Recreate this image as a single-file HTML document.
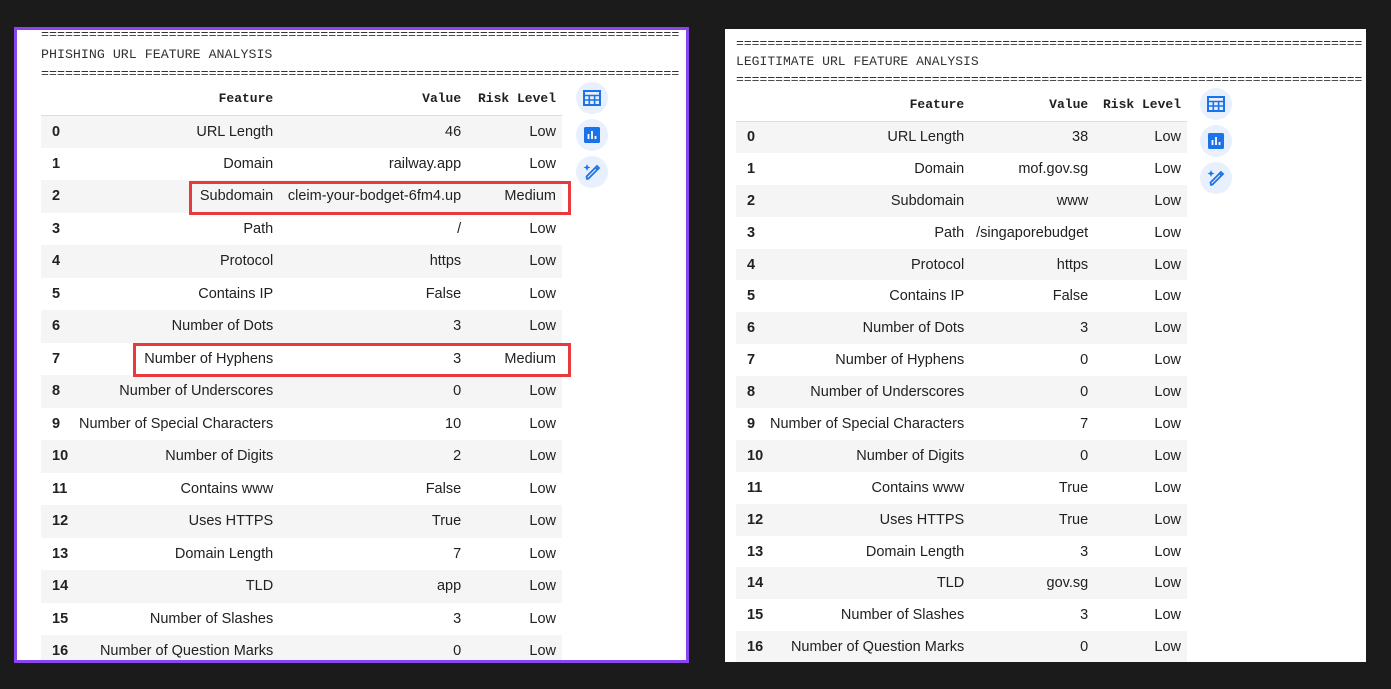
<!DOCTYPE html>
<html><head><meta charset="utf-8"><style>
*{margin:0;padding:0;box-sizing:border-box}
body{width:1391px;height:689px;background:#1c1b1c;position:relative;overflow:hidden;font-family:"Liberation Sans",sans-serif}
.panel{position:absolute;background:#fff;overflow:hidden}
#p1{left:14px;top:27px;width:675px;height:636px;border:3px solid #8b45f0}
#p2{left:725px;top:29px;width:641px;height:633px}
.mono{position:absolute;font-family:"Liberation Mono",monospace;font-size:13.3px;color:#333;white-space:pre;line-height:14px}
#p2 .mono{font-size:13.05px}
table{position:absolute;border-collapse:collapse;font-size:14.5px;color:#212121}
th{font-family:"Liberation Mono",monospace;font-size:13px;font-weight:bold;text-align:right;padding-right:6px;border-bottom:1px solid #ddd;color:#212121}
td{text-align:right;padding-right:6px;white-space:nowrap}
td.i{text-align:left;padding-left:11px;font-weight:bold}
tr.g td{background:#f5f5f5}
.ic{position:absolute;width:32px;height:32px;border-radius:50%;background:#e8f0fe}
.ic svg{position:absolute;left:6px;top:6px}
.red{position:absolute;border:3px solid #e8393c}
</style></head><body>
<div class="panel" id="p1">
<div class="mono" style="left:24px;top:-2px">================================================================================</div>
<div class="mono" style="left:24px;top:18px">PHISHING URL FEATURE ANALYSIS</div>
<div class="mono" style="left:24px;top:37px">================================================================================</div>
<table style="left:24px;top:52px;width:521px">
<colgroup><col style="width:38px"><col style="width:200px"><col style="width:188px"><col style="width:95px"></colgroup>
<tr style="height:33px"><th></th><th>Feature</th><th>Value</th><th>Risk Level</th></tr>
<tbody id="t1"></tbody>
</table>
<div class="ic" style="left:559px;top:52px"><svg width="20" height="20" viewBox="0 0 20 20"><rect x="2" y="3" width="16" height="14" fill="none" stroke="#1a73e8" stroke-width="2"/><path d="M2 7.5H18M2 12H18M7.3 7.5V17M12.6 7.5V17" stroke="#1a73e8" stroke-width="1.6"/></svg></div>
<div class="ic" style="left:559px;top:89px"><svg width="20" height="20" viewBox="0 0 20 20"><rect x="2" y="2" width="16" height="16" rx="1.5" fill="#1a73e8"/><path d="M6.5 9V14M10 6V14M13.5 11V14" stroke="#fff" stroke-width="1.8"/></svg></div>
<div class="ic" style="left:559px;top:126px"><svg width="20" height="20" viewBox="0 0 20 20"><path d="M5 17L4.5 14.5 13.5 5.5 15.5 7.5 6.5 16.5Z" fill="none" stroke="#1a73e8" stroke-width="1.8" stroke-linejoin="round"/><path d="M13.5 5.5L15 4 17 6 15.5 7.5" fill="none" stroke="#1a73e8" stroke-width="1.8"/><path d="M5 2L6 4.5 8.5 5.5 6 6.5 5 9 4 6.5 1.5 5.5 4 4.5Z" fill="#1a73e8"/></svg></div>
<div class="red" style="left:172px;top:151px;width:382px;height:34px"></div>
<div class="red" style="left:116px;top:313px;width:438px;height:34px"></div>
</div>
<div class="panel" id="p2">
<div class="mono" style="left:11px;top:8px">================================================================================</div>
<div class="mono" style="left:11px;top:26px">LEGITIMATE URL FEATURE ANALYSIS</div>
<div class="mono" style="left:11px;top:44px">================================================================================</div>
<table style="left:11px;top:59px;width:451px">
<colgroup><col style="width:34px"><col style="width:200px"><col style="width:124px"><col style="width:93px"></colgroup>
<tr style="height:33px"><th></th><th>Feature</th><th>Value</th><th>Risk Level</th></tr>
<tbody id="t2"></tbody>
</table>
<div class="ic" style="left:475px;top:59px"><svg width="20" height="20" viewBox="0 0 20 20"><rect x="2" y="3" width="16" height="14" fill="none" stroke="#1a73e8" stroke-width="2"/><path d="M2 7.5H18M2 12H18M7.3 7.5V17M12.6 7.5V17" stroke="#1a73e8" stroke-width="1.6"/></svg></div>
<div class="ic" style="left:475px;top:96px"><svg width="20" height="20" viewBox="0 0 20 20"><rect x="2" y="2" width="16" height="16" rx="1.5" fill="#1a73e8"/><path d="M6.5 9V14M10 6V14M13.5 11V14" stroke="#fff" stroke-width="1.8"/></svg></div>
<div class="ic" style="left:475px;top:133px"><svg width="20" height="20" viewBox="0 0 20 20"><path d="M5 17L4.5 14.5 13.5 5.5 15.5 7.5 6.5 16.5Z" fill="none" stroke="#1a73e8" stroke-width="1.8" stroke-linejoin="round"/><path d="M13.5 5.5L15 4 17 6 15.5 7.5" fill="none" stroke="#1a73e8" stroke-width="1.8"/><path d="M5 2L6 4.5 8.5 5.5 6 6.5 5 9 4 6.5 1.5 5.5 4 4.5Z" fill="#1a73e8"/></svg></div>
</div>
<script>
var f=["URL Length","Domain","Subdomain","Path","Protocol","Contains IP","Number of Dots","Number of Hyphens","Number of Underscores","Number of Special Characters","Number of Digits","Contains www","Uses HTTPS","Domain Length","TLD","Number of Slashes","Number of Question Marks"];
var v1=["46","railway.app","cleim-your-bodget-6fm4.up","/","https","False","3","3","0","10","2","False","True","7","app","3","0"];
var r1=["Low","Low","Medium","Low","Low","Low","Low","Medium","Low","Low","Low","Low","Low","Low","Low","Low","Low"];
var v2=["38","mof.gov.sg","www","/singaporebudget","https","False","3","0","0","7","0","True","True","3","gov.sg","3","0"];
function b(id,v,r,h){var s="";for(var i=0;i<17;i++){s+='<tr class="'+(i%2==0?'g':'')+'" style="height:'+h+'px"><td class="i">'+i+'</td><td>'+f[i]+'</td><td>'+v[i]+'</td><td>'+r[i]+'</td></tr>';}document.getElementById(id).innerHTML=s;}
b("t1",v1,r1,32.5);
b("t2",v2,r1.map(function(){return "Low"}),31.9);
</script>
</body></html>
